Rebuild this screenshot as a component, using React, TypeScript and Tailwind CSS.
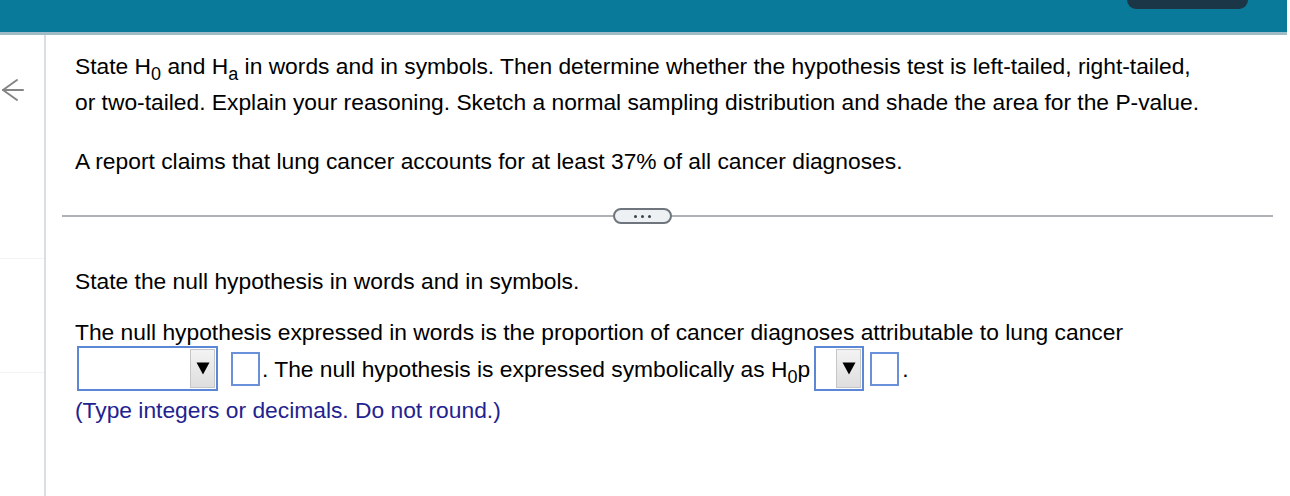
export default function App() {
  const font = { fontFamily: '"Liberation Sans", Arial, Helvetica, sans-serif' };

  const Select = ({ w }: { w: string }) => (
    <span className={`inline-flex ${w} h-[45px] border-2 border-[#5b87d6] bg-white items-center justify-end pr-[1px]`}>
      <span className="w-[25px] h-[39px] bg-gradient-to-b from-[#f3f3f3] to-[#dedede] border border-[#c6c6c6] flex items-center justify-center">
        <svg width="14" height="13" viewBox="0 0 14 13">
          <path d="M0.5 0.5 H13.5 L7 12.5 Z" fill="#000" />
        </svg>
      </span>
    </span>
  );

  const Box = () => <span className="block w-[29px] h-[34px] border-2 border-[#6a90d9] bg-white" />;

  const Sub = ({ children }: { children: string }) => (
    <span className="relative top-[6px] text-[18px] leading-none">{children}</span>
  );

  return (
    <div className="w-full h-[496px] bg-white flex flex-col overflow-hidden text-black" style={font}>
      <div className="h-[35px] flex shrink-0">
        <div className="flex-1 bg-[#0a7a9a] border-b-[3px] border-[#9dbcc8] relative">
          <div className="absolute left-[1127px] top-0 w-[121px] h-[9px] bg-[#1b3647] rounded-b-[14px]" />
        </div>
        <div className="w-[3px] bg-white" />
      </div>

      <div className="flex flex-1">
        <div className="w-[46px] shrink-0 border-r-2 border-[#dadee3] flex flex-col">
          <div className="h-[224px] border-b border-[#f3f3f3] relative">
            <svg className="absolute left-0 top-[43px]" width="26" height="26" viewBox="0 0 26 26" fill="none" stroke="#858585" strokeWidth="2" strokeLinecap="round">
              <path d="M3 12 H23" />
              <path d="M3 12 L17 2" />
              <path d="M3 12 L17 22" />
            </svg>
          </div>
          <div className="h-[114px] border-b border-[#f3f3f3]" />
        </div>

        <div className="flex-1 flex flex-col">
          <div className="pl-[29px] pt-[16px] text-[22.8px] leading-[30px]">
            <p>
              State H<Sub>0</Sub> and H<Sub>a</Sub> in words and in symbols. Then determine whether the hypothesis test is left-tailed, right-tailed,
            </p>
            <p className="mt-[6px]">
              or two-tailed. Explain your reasoning. Sketch a normal sampling distribution and shade the area for the P-value.
            </p>
            <p className="mt-[29px]">A report claims that lung cancer accounts for at least 37% of all cancer diagnoses.</p>
          </div>

          <div className="mt-[32px] ml-[16px] mr-[17px] h-[16px] relative flex items-center">
            <div className="w-full h-[2px] bg-[#aeb2b7]" />
            <div className="absolute left-[551px] top-0 w-[59px] h-[16px] rounded-full border-2 border-[#6f757c] bg-[#eef1f4] flex items-center justify-center gap-[4px]">
              <span className="w-[3px] h-[3px] rounded-full bg-[#3c4249]" />
              <span className="w-[3px] h-[3px] rounded-full bg-[#3c4249]" />
              <span className="w-[3px] h-[3px] rounded-full bg-[#3c4249]" />
            </div>
          </div>

          <div className="pl-[29px] text-[22.8px] leading-[30px]">
            <p className="mt-[42px]">State the null hypothesis in words and in symbols.</p>
            <p className="mt-[21px]">The null hypothesis expressed in words is the proportion of cancer diagnoses attributable to lung cancer</p>
            <div className="flex items-center h-[45px] -mt-[1px] ml-[2px]">
              <Select w="w-[141px]" />
              <span className="ml-[13px]"><Box /></span>
              <span className="ml-[2px] whitespace-pre">. The null hypothesis is expressed symbolically as H<Sub>0</Sub>p</span>
              <span className="ml-[4px]"><Select w="w-[50px]" /></span>
              <span className="ml-[6px]"><Box /></span>
              <span className="ml-[3px]">.</span>
            </div>
            <p className="mt-[4px] text-[#1f2390]">(Type integers or decimals. Do not round.)</p>
          </div>
        </div>
      </div>
    </div>
  );
}
